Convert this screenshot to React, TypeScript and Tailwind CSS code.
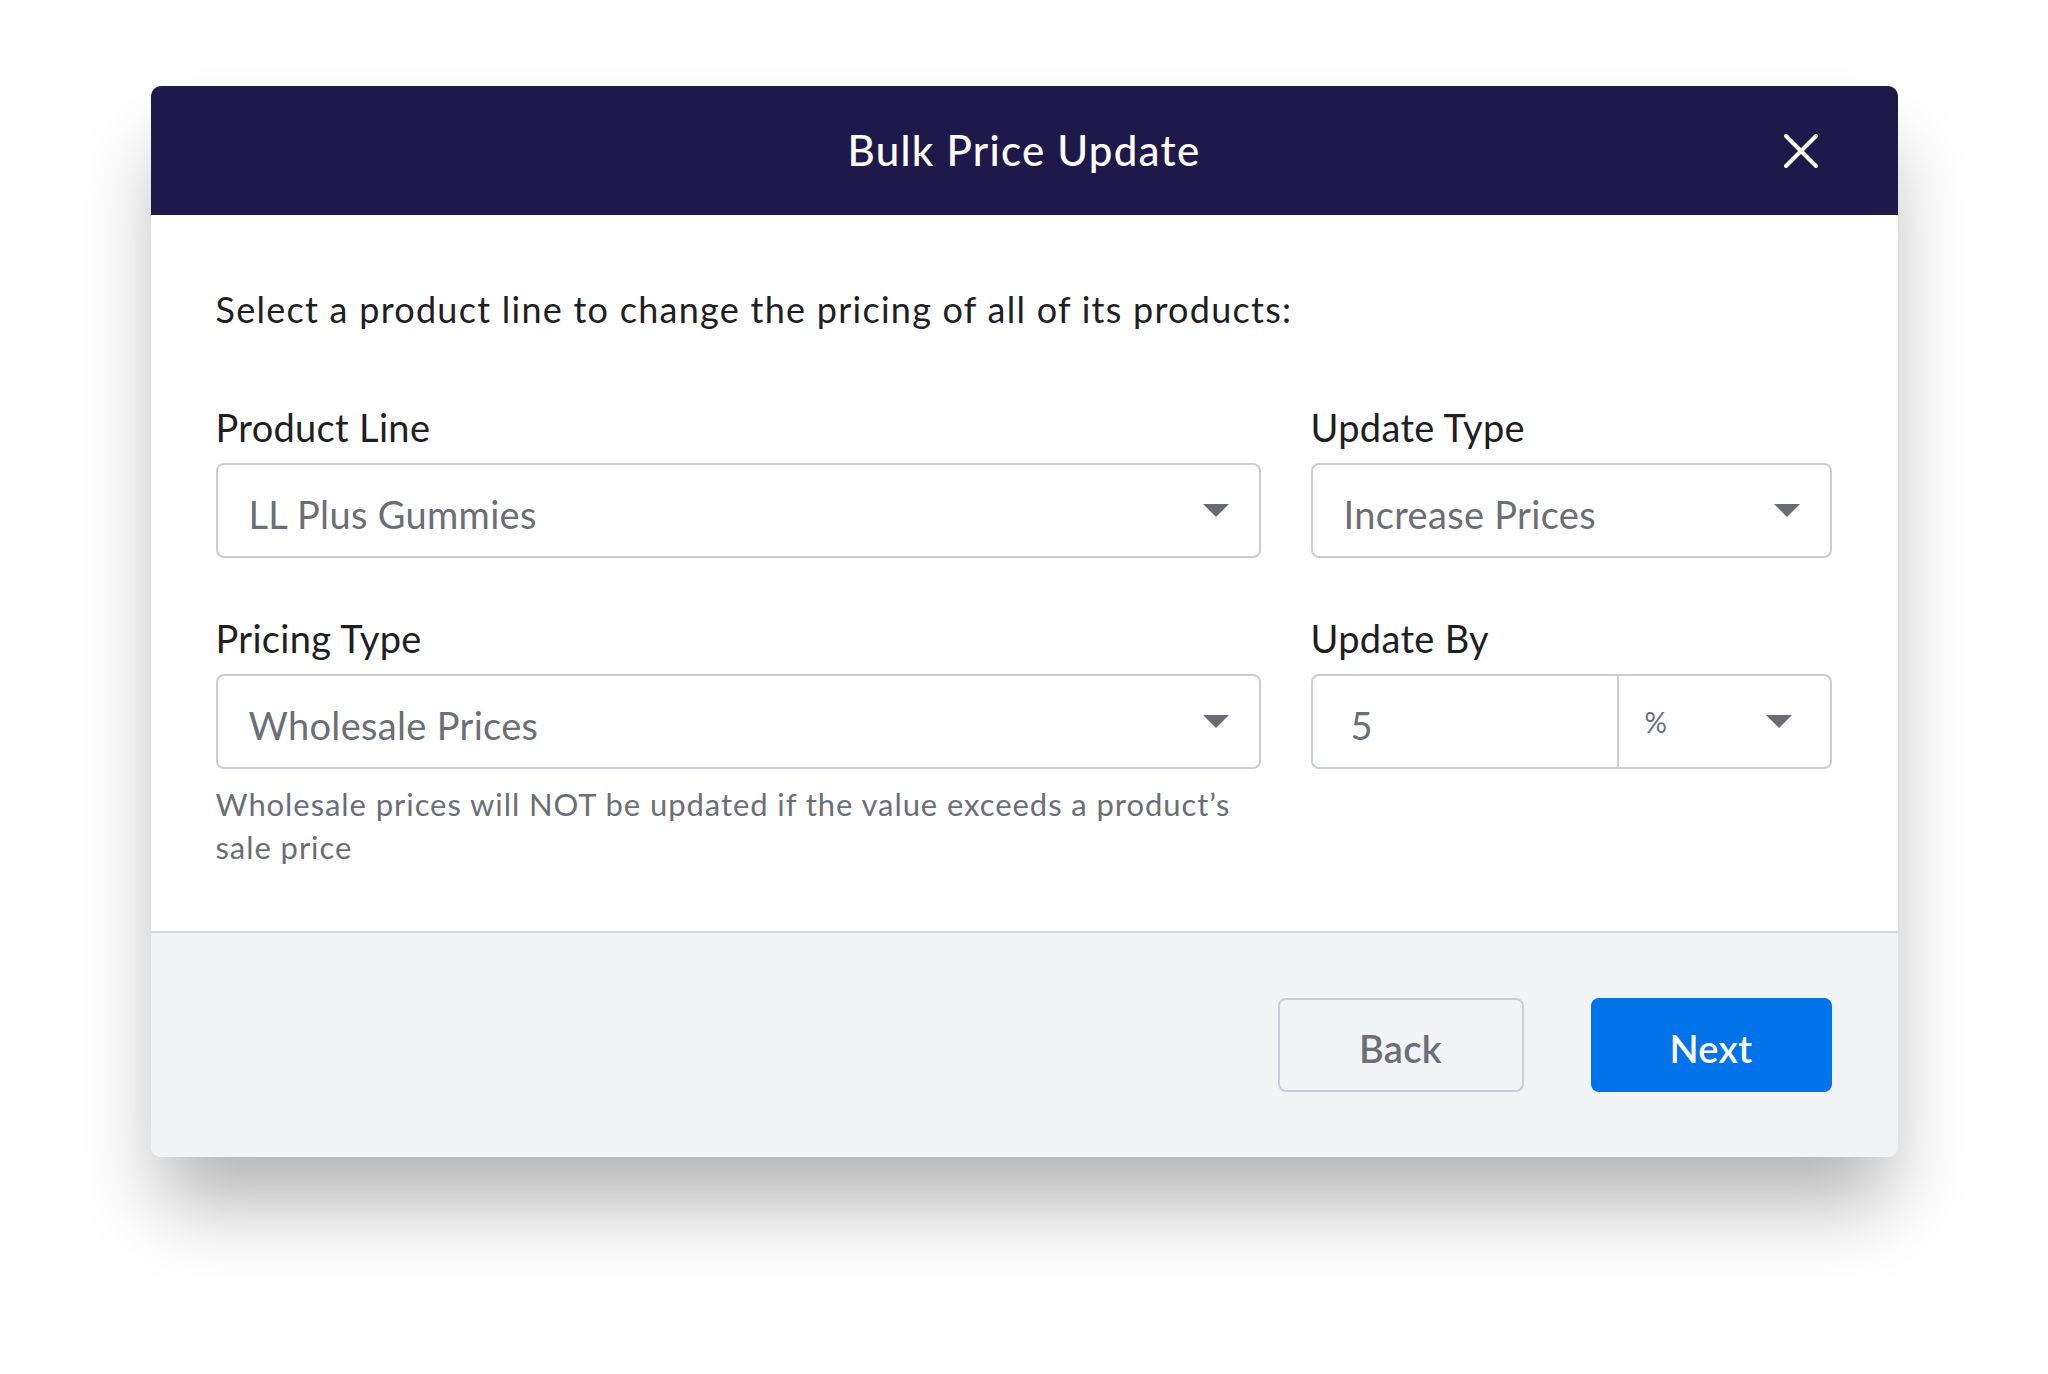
function Caret() {
  return (
    <svg width="26" height="13" viewBox="0 0 26 13" className="shrink-0">
      <path d="M0 0H26L13 13Z" fill="#6b6c73" />
    </svg>
  );
}

function SelectBox({ value }: { value: string }) {
  return (
    <div className="flex h-[95px] items-center justify-between rounded-[8px] border-2 border-[#cacdd8] bg-white pl-[31px] pr-[30px]">
      <span className="pt-[8px] text-[38px] text-[#6c6e77]">{value}</span>
      <Caret />
    </div>
  );
}

function Field({ label, children }: { label: string; children: React.ReactNode }) {
  return (
    <div className="flex flex-col gap-[12px]">
      <label className="text-[38px] leading-[48px] text-[#1e1e24]">{label}</label>
      {children}
    </div>
  );
}

export default function App() {
  return (
    <div className="min-h-screen bg-white pt-[86px] font-['Lato',sans-serif] tracking-[0.02em]">
      <div className="mx-auto w-[1747px] overflow-hidden rounded-[10px] shadow-[0_55px_75px_-10px_rgba(0,0,0,0.3)]">
        <div className="relative flex h-[129px] items-center justify-center bg-[#1f184a]">
          <h1 className="text-[42px] font-medium tracking-[0.03em] text-white">Bulk Price Update</h1>
          <button className="absolute right-[80px] top-1/2 -translate-y-1/2 p-0">
            <svg width="34" height="34" viewBox="0 0 34 34">
              <path d="M2 2L32 32M32 2L2 32" stroke="white" strokeWidth="4" strokeLinecap="round" />
            </svg>
          </button>
        </div>

        <div className="bg-white px-[65px] pb-[62px] pt-[72px]">
          <p className="text-[36px] leading-[44px] tracking-[0.035em] text-[#1e1e24]">
            Select a product line to change the pricing of all of its products:
          </p>

          <div className="mt-[72px] grid grid-cols-[1045px_521px] gap-x-[50px] gap-y-[56px]">
            <Field label="Product Line">
              <SelectBox value="LL Plus Gummies" />
            </Field>
            <Field label="Update Type">
              <SelectBox value="Increase Prices" />
            </Field>
            <div>
              <Field label="Pricing Type">
                <SelectBox value="Wholesale Prices" />
              </Field>
              <p className="mt-[14px] text-[31px] leading-[43px] tracking-[0.03em] text-[#6c6e77]">
                Wholesale prices will NOT be updated if the value exceeds a product’s sale price
              </p>
            </div>
            <Field label="Update By">
              <div className="flex h-[95px] rounded-[8px] border-2 border-[#cacdd8] bg-white">
                <div className="flex w-[306px] items-center border-r-2 border-[#cacdd8] pl-[38px]">
                  <span className="pt-[8px] text-[38px] text-[#6c6e77]">5</span>
                </div>
                <div className="flex flex-1 items-center justify-between pl-[26px] pr-[38px]">
                  <span className="text-[28px] text-[#6c6e77]">%</span>
                  <Caret />
                </div>
              </div>
            </Field>
          </div>
        </div>

        <div className="flex justify-end gap-[67px] border-t-2 border-[#d3d6de] bg-[#f2f3f5] px-[66px] pb-[65px] pt-[65px]">
          <button className="h-[94px] w-[246px] rounded-[8px] border-2 border-[#cacdd8] pt-[6px] text-[38px] font-semibold text-[#6c6e77]">
            Back
          </button>
          <button className="h-[94px] w-[241px] rounded-[8px] bg-[#0073ea] pt-[6px] text-[38px] font-semibold text-white">
            Next
          </button>
        </div>
      </div>
    </div>
  );
}
